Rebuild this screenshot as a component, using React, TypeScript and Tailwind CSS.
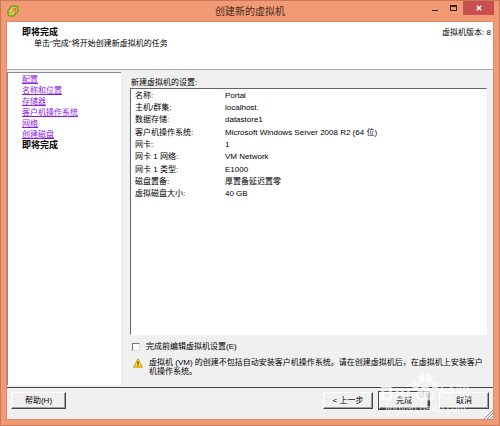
const steps = [
  "配置",
  "名称和位置",
  "存储器",
  "客户机操作系统",
  "网络",
  "创建磁盘",
];

const settings = [
  ["名称:", "Portal"],
  ["主机/群集:", "localhost."],
  ["数据存储:", "datastore1"],
  ["客户机操作系统:", "Microsoft Windows Server 2008 R2 (64 位)"],
  ["网卡:", "1"],
  ["网卡 1 网络:", "VM Network"],
  ["网卡 1 类型:", "E1000"],
  ["磁盘置备:", "厚置备延迟置零"],
  ["虚拟磁盘大小:", "40 GB"],
];

const raised =
  "h-[17px] border border-t-white border-l-white border-r-[#444] border-b-[#444] bg-[#f0f0f0] text-center shadow-[inset_-1px_-1px_0_#a0a0a0]";

function AppIcon() {
  return (
    <svg viewBox="0 0 12 12" className="h-3 w-3" fill="none">
      <path
        d="M4.500 1h5a1.500 1.500 0 0 1 1.500 1.500v4A1.500 1.500 0 0 1 9.500 8H8v1.500A1.500 1.500 0 0 1 6.500 11h-4A1.500 1.500 0 0 1 1 9.500v-4A1.500 1.500 0 0 1 2.500 4H3V2.500A1.500 1.500 0 0 1 4.500 1z"
        fill="#a5c832"
        stroke="#5c8a1c"
      />
      <path d="M4.500 2.800h4.700v3.700H6.500v2.700H2.800V5.500h1.700z" fill="#fbd9a0" />
      <path d="M3.500 8.500 8 4M5.500 3.600h2.900v2.900" stroke="#e8791e" strokeWidth="1.3" />
    </svg>
  );
}

function TitleBar() {
  return (
    <div className="flex h-5 items-start">
      <div className="flex w-20 pt-1 pl-px">
        <AppIcon />
      </div>
      <h1 className="flex-1 pt-[3px] text-center text-[10px] leading-4 text-[#4a2c20]">
        创建新的虚拟机
      </h1>
      <div className="flex w-20 justify-end">
        <button aria-label="最小化" className="flex h-3.5 w-4 items-end justify-center pb-1">
          <span className="h-px w-1.5 bg-[#3a2018]" />
        </button>
        <button aria-label="最大化" className="flex h-3.5 w-5 items-center justify-center">
          <span className="h-1.5 w-[7px] border border-t-2 border-[#3a2018]" />
        </button>
        <button
          aria-label="关闭"
          className="flex h-3.5 w-[31px] items-center justify-center bg-[#c94f4f]"
        >
          <svg viewBox="0 0 6 6" className="h-1.5 w-1.5" stroke="#fff" strokeWidth="1.4">
            <path d="M.7.7 5.3 5.3M5.3.7.7 5.3" />
          </svg>
        </button>
      </div>
    </div>
  );
}

function Watermark() {
  return (
    <div className="pointer-events-none absolute right-[22px] bottom-1 opacity-70">
      <div className="flex items-end text-white">
        <span className="text-xl leading-5 font-bold">Bai</span>
        <svg viewBox="0 0 28 30" className="h-[30px] w-7" fill="#fff">
          <ellipse cx="4.500" cy="13" rx="3.200" ry="4.200" />
          <ellipse cx="10.500" cy="5.500" rx="3.200" ry="4.500" />
          <ellipse cx="18" cy="5.500" rx="3.200" ry="4.500" />
          <ellipse cx="24" cy="13" rx="3.200" ry="4.200" />
          <path d="M14 12c-3 0-4 3-6 5-2 2-4 4-3 7s4 4 9 3c5 1 8 0 9-3s-1-5-3-7-3-5-6-5z" />
          <path
            d="M12.500 17v7M12.500 21.500a2 2 0 1 0-4 .5 2 2 0 0 0 4 0M15.500 19.500v3c0 1 .5 1.500 2 1.500s2-.5 2-1.500v-3"
            fill="none"
            stroke="#d8d8d8"
            strokeWidth="1.200"
          />
        </svg>
        <span className="text-base leading-5">经验</span>
      </div>
      <p className="text-center text-[10px] leading-3 text-white">jingyan.baidu.com</p>
    </div>
  );
}

export default function App() {
  return (
    <div className="flex min-h-screen flex-col border border-[#c9795b] bg-[#f19a74] px-[5px] pb-[5px] font-['Liberation_Sans','Noto_Sans_CJK_SC',sans-serif] text-[8px] leading-[11px] text-black">
      <TitleBar />
      <main className="relative flex flex-1 flex-col border border-[#dc8a68] bg-[#f0f0f0]">
        <header className="flex h-12 justify-between border-b border-[#a9a9a9] bg-white pt-[5px] pr-0.5 pl-[15px]">
          <div>
            <h2 className="text-[9px] font-bold">即将完成</h2>
            <p className="pl-3">单击"完成"将开始创建新虚拟机的任务</p>
          </div>
          <p>虚拟机版本: 8</p>
        </header>

        <div className="flex flex-1 pt-0.5">
          <nav className="mb-0.5 w-[114px] border-t border-l border-[#888] bg-white pt-px pl-3.5">
            <ul>
              {steps.map((step) => (
                <li key={step}>
                  <a href="#" className="text-[#8a1be0] underline">
                    {step}
                  </a>
                </li>
              ))}
              <li className="text-[9px] font-bold">即将完成</li>
            </ul>
          </nav>

          <section className="flex flex-1 flex-col pt-[5px] pr-1.5 pb-[11px] pl-[9px]">
            <h3 className="pl-px">新建虚拟机的设置:</h3>
            <div className="flex-1 border-t border-r border-b border-l border-t-[#666] border-r-white border-b-white border-l-[#666] bg-white pl-1">
              <table className="h-[111px] w-full">
                <tbody>
                  {settings.map(([label, value]) => (
                    <tr key={label}>
                      <th scope="row" className="w-[90px] p-0 text-left font-normal">
                        {label}
                      </th>
                      <td className="p-0">{value}</td>
                    </tr>
                  ))}
                </tbody>
              </table>
            </div>
            <label className="mt-1.5 flex items-center gap-1.5 pl-0.5">
              <input
                type="checkbox"
                className="h-2 w-2 appearance-none border border-t-[#777] border-r-[#ddd] border-b-[#ddd] border-l-[#777] bg-white"
              />
              完成前编辑虚拟机设置(E)
            </label>
            <div className="mt-1.5 flex gap-1.5 pl-[3px] leading-[9px]">
              <svg viewBox="0 0 10 10" className="h-2.5 w-2.5 shrink-0">
                <path d="M5 .8 9.500 9.200H.5z" fill="#ffd91c" stroke="#b58b13" strokeWidth=".8" />
                <path d="M5 3.500v3M5 7.300v1" stroke="#222" />
              </svg>
              <p>
                虚拟机 (VM) 的创建不包括自动安装客户机操作系统。请在创建虚拟机后，在虚拟机上安装客户机操作系统。
              </p>
            </div>
          </section>
        </div>

        <footer className="flex h-8 items-start border-t border-[#444] px-1 pt-1">
          <button className={`${raised} w-[55px]`}>帮助(H)</button>
          <div className="ml-auto flex">
            <button className={`${raised} mr-1.5 w-[50px]`}>&lt; 上一步</button>
            <button className={`${raised} mr-2.5 w-[50px] outline outline-[#444]`}>完成</button>
            <button className={`${raised} w-[50px]`}>取消</button>
          </div>
        </footer>
        <svg
          viewBox="0 0 10 10"
          className="absolute right-0 bottom-0 h-2.5 w-2.5"
          stroke="#999"
          strokeWidth="1"
        >
          <path d="M1 10 10 1M4 10l6-6M7 10l3-3" />
        </svg>
        <Watermark />
      </main>
    </div>
  );
}
